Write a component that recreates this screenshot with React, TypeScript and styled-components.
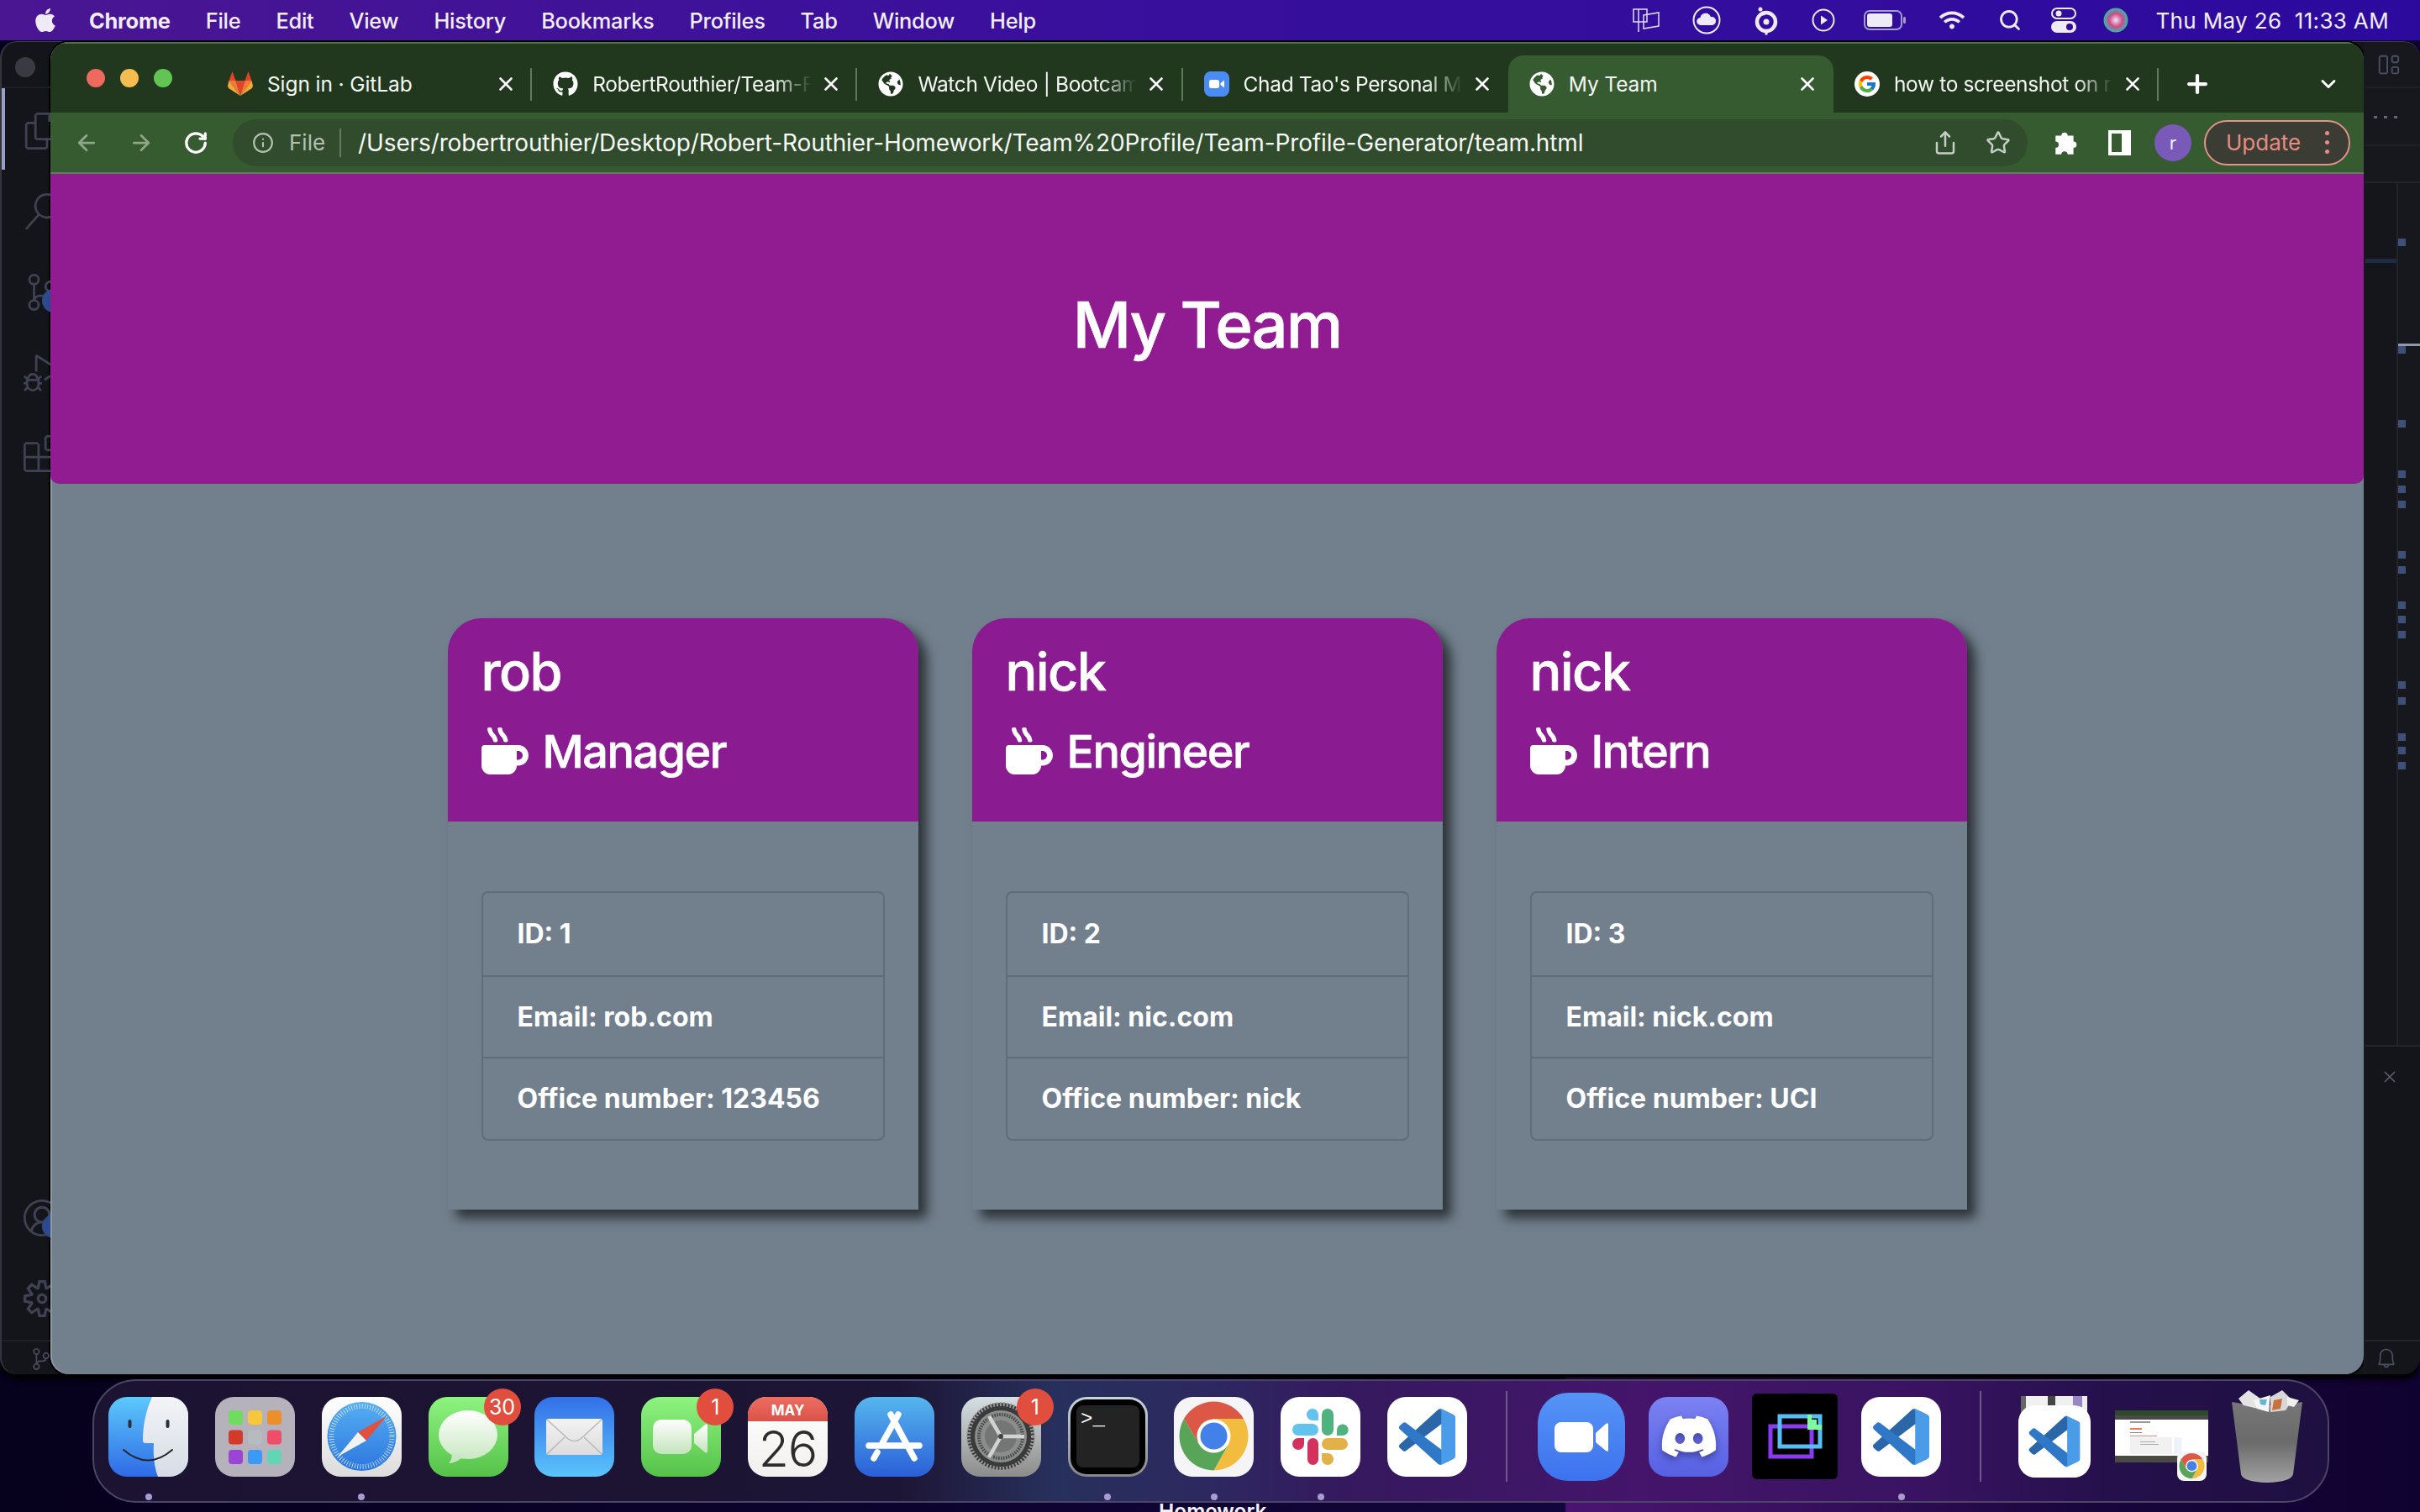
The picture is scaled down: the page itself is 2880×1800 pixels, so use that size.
import React from 'react';
import styled, { createGlobalStyle } from 'styled-components';
import { FaApple, FaDiscord } from 'react-icons/fa6';
import { FaGithub, FaGlobeAmericas, FaMugHot, FaWifi } from 'react-icons/fa';
import { FcGoogle } from 'react-icons/fc';
import { ArrowLeft, ArrowRight, ChevronDown, Info, Plus, RotateCw, Search, Share, Star, X } from 'lucide-react';
import {
  VscAccount, VscBell, VscClose, VscDebugAlt, VscExtensions, VscFiles, VscLayout, VscSearch,
  VscSettingsGear, VscSourceControl,
} from 'react-icons/vsc';

const GlobalStyle = createGlobalStyle`
  html, body { margin: 0; padding: 0; background: #07021f; }
  * { box-sizing: border-box; }
  body { font-family: Inter, "Liberation Sans", sans-serif; }
`;

const Desktop = styled.div`
  position: relative;
  width: 2880px;
  height: 1800px;
  overflow: hidden;
  background: linear-gradient(
    90deg,
    #06011c 0,
    #12053c 1862px,
    #4a1470 1864px,
    #3a1060 2120px,
    #17053b 2500px,
    #100230 100%
  );
`;

const MenuBar = styled.header`
  height: 48px;
  display: flex;
  align-items: center;
  padding: 0 37px 0 40px;
  color: #f1edf9;
  font-size: 26px;
  background: linear-gradient(90deg, #4a1692 0%, #3a109c 40%, #2c0a9e 100%);
`;

const MenuLeft = styled.nav`
  display: flex;
  align-items: center;
  gap: 42px;
`;

const AppleMark = styled(FaApple)`
  width: 28px;
  height: 32px;
  margin-right: -4px;
  color: #efeaf7;
`;

const MenuItem = styled.span<{ $bold?: boolean }>`
  font-size: 25.4px;
  font-weight: ${(p) => (p.$bold ? 700 : 500)};
  letter-spacing: -0.25px;
`;

const MenuRight = styled.div`
  margin-left: auto;
  display: flex;
  align-items: center;
`;

const StatusSlot = styled.span<{ $w: number; $ml: number }>`
  display: inline-flex;
  justify-content: center;
  width: ${(p) => p.$w}px;
  margin-left: ${(p) => p.$ml}px;
`;

const Clock = styled.span`
  margin-left: 32px;
  font-weight: 400;
  letter-spacing: 0.35px;
  white-space: nowrap;
`;

const Workspace = styled.main`
  display: flex;
  height: 1586px;
  margin-top: 2px;
  background: #14151a;
  border-radius: 20px;
  box-shadow: 0 -1px 0 #3d3d4c, 0 6px 6px #000;
`;

const LeftRail = styled.aside`
  position: relative;
  width: 60px;
  flex: none;
  display: flex;
  flex-direction: column;
  overflow: hidden;
  border-left: 2px solid #34343e;
  border-radius: 20px 0 0 20px;
`;

const RailTop = styled.div`
  height: 55px;
  flex: none;
  padding: 18px 0 0 16px;
  border-bottom: 2px solid #1e1f25;
`;

const DimLight = styled.div`
  width: 24px;
  height: 24px;
  border-radius: 50%;
  background: #3a3b42;
`;

const ActiveMark = styled.div`
  position: absolute;
  left: 0;
  top: 55px;
  width: 4px;
  height: 97px;
  background: #9aa0c2;
`;

const RailIcons = styled.div`
  flex: 1;
  display: flex;
  flex-direction: column;
  gap: 52px;
  padding: 29px 0 27px 26px;
`;

const RailIcon = styled.div<{ $push?: boolean }>`
  position: relative;
  width: 44px;
  height: 44px;
  flex: none;
  color: #3f4252;
  margin-top: ${(p) => (p.$push ? 'auto' : '0')};
  svg { width: 44px; height: 44px; display: block; }
`;

const RailBadge = styled.span`
  position: absolute;
  left: 22px;
  top: 18px;
  width: 28px;
  height: 28px;
  border-radius: 50%;
  background: #2c4a8c;
`;

const RailStatus = styled.div`
  height: 41px;
  flex: none;
  padding: 8px 0 0 34px;
  color: #4a4d5e;
  border-top: 2px solid #1e1f25;
  svg { width: 26px; height: 26px; display: block; }
`;

const ChromeWindow = styled.section`
  width: 2753px;
  flex: none;
  display: flex;
  flex-direction: column;
  overflow: hidden;
  border-radius: 22px;
  background: #72808e;
  box-shadow: 0 0 0 2px #000, inset 2px 0 0 #8c98a4;
`;

const TabStrip = styled.div`
  height: 84px;
  flex: none;
  display: flex;
  align-items: flex-end;
  background: #21381f;
  border-top: 2px solid #566d52;
  color: #fff;
`;

const Lights = styled.div`
  width: 186px;
  flex: none;
  align-self: flex-start;
  display: flex;
  gap: 18px;
  padding: 30px 0 0 43px;
`;

const Light = styled.span<{ $c: string }>`
  width: 22px;
  height: 22px;
  border-radius: 50%;
  background: ${(p) => p.$c};
`;

const TabBox = styled.div<{ $active?: boolean; $sep?: boolean }>`
  position: relative;
  width: 387.2px;
  height: 68px;
  flex: none;
  display: flex;
  align-items: center;
  padding: 0 0 0 25px;
  border-radius: 18px 18px 0 0;
  background: ${(p) => (p.$active ? '#375b31' : 'transparent')};

  &::after {
    content: '';
    display: ${(p) => (p.$sep ? 'block' : 'none')};
    position: absolute;
    right: 0;
    top: 15px;
    height: 39px;
    width: 2px;
    background: #5f7a5b;
  }
`;

const TabIcon = styled.span`
  width: 30px;
  height: 30px;
  flex: none;
  display: flex;
  align-items: center;
  justify-content: center;
  svg { width: 30px; height: 30px; display: block; }
`;

const TabTitle = styled.span<{ $fade?: boolean }>`
  width: 266px;
  margin-left: 17px;
  flex: none;
  white-space: nowrap;
  font-size: 24.5px;
  letter-spacing: ${(p) => (p.$fade ? '-0.35px' : '-0.1px')};
  color: #f4f6f3;
  ${(p) => (p.$fade ? 'mask-image: linear-gradient(90deg, #000 82%, transparent 98%);' : '')}
`;

const TabClose = styled(X)`
  width: 26px;
  height: 26px;
  flex: none;
  margin-left: 5px;
  color: #fff;
`;

const GoogleDisc = styled.span`
  width: 30px;
  height: 30px;
  border-radius: 50%;
  background: #fff;
  display: flex;
  align-items: center;
  justify-content: center;
  svg { width: 24px; height: 24px; }
`;

const NewTab = styled(Plus)`
  width: 34px;
  height: 34px;
  margin: 0 0 17px 29px;
  color: #fff;
  stroke-width: 3;
`;

const TabChevron = styled(ChevronDown)`
  width: 28px;
  height: 28px;
  margin: 0 28px 20px auto;
  color: #fff;
  stroke-width: 2.5;
`;

const Toolbar = styled.div`
  height: 73px;
  flex: none;
  display: flex;
  align-items: center;
  padding: 0 0 0 28px;
  background: #375b31;
  border-bottom: 2px solid #5f7d5a;
  color: #fff;
`;

const NavButton = styled.span<{ $dim?: boolean }>`
  width: 30px;
  height: 30px;
  margin-right: 35px;
  flex: none;
  color: ${(p) => (p.$dim ? '#8fa58c' : '#fff')};
  svg { width: 30px; height: 30px; display: block; }
`;

const Omnibox = styled.div`
  width: 2136px;
  height: 56px;
  flex: none;
  margin-left: -6px;
  display: flex;
  align-items: center;
  padding: 0 20px 0 23px;
  border-radius: 28px;
  background: #304c2c;
`;

const FileChip = styled.span`
  display: flex;
  align-items: center;
  gap: 18px;
  color: #b4c0b2;
  font-size: 26px;
  padding-right: 17px;
  border-right: 2px solid #66795f;
  height: 34px;
  svg { width: 26px; height: 26px; }
`;

const UrlText = styled.span`
  margin-left: 20px;
  font-size: 28px;
  letter-spacing: -0.13px;
  color: #f6f8f5;
  white-space: nowrap;
`;

const OmniActions = styled.span`
  margin-left: auto;
  display: flex;
  align-items: center;
  gap: 33px;
  color: #c4cec2;
  svg { width: 30px; height: 30px; display: block; }
`;

const PuzzleIcon = styled.svg`
  width: 32px;
  height: 32px;
  margin-left: 29px;
  flex: none;
`;

const SidePanel = styled.span`
  width: 27px;
  height: 30px;
  margin-left: 35px;
  flex: none;
  border: 4px solid #fff;
  border-right-width: 11px;
`;

const Avatar = styled.span`
  width: 44px;
  height: 44px;
  margin-left: 28px;
  flex: none;
  display: flex;
  align-items: center;
  justify-content: center;
  border-radius: 50%;
  background: #7a5ab8;
  color: #f2eefa;
  font-size: 22px;
`;

const UpdateButton = styled.span`
  width: 174px;
  height: 54px;
  margin-left: 15px;
  flex: none;
  display: flex;
  align-items: center;
  padding-left: 24px;
  border: 2px solid #e8908a;
  border-radius: 27px;
  background: #3b3c33;
  color: #e58d84;
  font-size: 26px;
`;

const UpdateDots = styled.span`
  margin-left: 29px;
  display: flex;
  flex-direction: column;
  gap: 6px;
  i { display: block; width: 5px; height: 5px; border-radius: 50%; background: #e58d84; }
`;

const Hero = styled.div`
  height: 369px;
  flex: none;
  display: flex;
  align-items: center;
  justify-content: center;
  padding-bottom: 12px;
  border-radius: 0 0 10px 10px;
  background: #911c92;
`;

const HeroTitle = styled.h1`
  margin: 0;
  font-size: 76px;
  font-weight: 500;
  letter-spacing: -2px;
  color: #fff;
  -webkit-text-stroke: 0.6px #fff;
`;

const Team = styled.div`
  display: flex;
  justify-content: center;
  gap: 64px;
  margin-top: 160px;
`;

const Card = styled.article`
  width: 560px;
  height: 704px;
  display: flex;
  flex-direction: column;
  background: #72808e;
  border-radius: 40px 40px 0 0;
  box-shadow: 10px 10px 14px rgba(0, 0, 0, 0.62);
`;

const CardHead = styled.div`
  height: 242px;
  flex: none;
  padding: 25px 40px 0;
  border-radius: 40px 40px 0 0;
  background: #8a1b90;
  color: #fff;
  -webkit-text-stroke: 0.6px #fff;
`;

const Name = styled.h2`
  margin: 0 0 23px;
  font-size: 63px;
  line-height: 77px;
  font-weight: 500;
  letter-spacing: -1.6px;
`;

const Role = styled.h3`
  margin: 0;
  display: flex;
  align-items: center;
  gap: 17px;
  font-size: 54px;
  line-height: 67px;
  font-weight: 500;
  letter-spacing: -1.5px;
  svg { width: 56px; height: 56px; flex: none; margin-top: -2px; -webkit-text-stroke: 0; }
`;

const CardBody = styled.div`
  flex: 1;
  padding: 83px 40px;
`;

const InfoList = styled.ul`
  margin: 0;
  padding: 0;
  list-style: none;
  border: 2px solid #5f6c7a;
  border-radius: 8px;
`;

const InfoRow = styled.li`
  height: 97.5px;
  display: flex;
  align-items: center;
  padding: 0 40px 0 41px;
  font-size: 32px;
  font-weight: 700;
  letter-spacing: 0;
  color: #fff;
  & + & { border-top: 2px solid #5f6c7a; }
`;

const RightRail = styled.aside`
  flex: 1;
  display: flex;
  flex-direction: column;
  overflow: hidden;
  padding-left: 2px;
  border-radius: 0 20px 20px 0;
  background: #17181e;
  color: #4c5063;
`;

const RightHead = styled.div`
  height: 55px;
  flex: none;
  padding: 12px 0 0 12px;
  border-bottom: 2px solid #1f2027;
  svg { width: 30px; height: 30px; display: block; }
`;

const RightDots = styled.div`
  height: 69px;
  flex: none;
  display: flex;
  gap: 8px;
  padding: 33px 0 0 10px;
  border-bottom: 2px solid #1f2027;
  i { width: 4px; height: 3px; background: #62667a; }
`;

const RightSpacer = styled.div`
  height: 44px;
  flex: none;
  border-bottom: 2px solid #22232b;
`;

const EditorArea = styled.div`
  height: 1028px;
  flex: none;
  display: flex;
  border-bottom: 2px solid #22232b;
`;

const EditorPane = styled.div`
  width: 39px;
  flex: none;
  background: #15161b;
  border-right: 2px solid #22232b;
`;

const FindLine = styled.div`
  height: 5px;
  margin-top: 90px;
  background: #1f2b40;
`;

const Minimap = styled.div`
  flex: 1;
  display: flex;
  flex-direction: column;
`;

const Tick = styled.div<{ $top: number; $white?: boolean }>`
  width: ${(p) => (p.$white ? '100%' : '9px')};
  height: ${(p) => (p.$white ? 3 : 9)}px;
  margin-top: ${(p) => p.$top}px;
  flex: none;
  background: ${(p) => (p.$white ? '#9397ab' : '#3e5078')};
`;

const PanelArea = styled.div`
  flex: 1;
  padding: 24px 0 0 17px;
  background: #14151a;
  svg { width: 24px; height: 24px; display: block; color: #5d6174; }
`;

const RightStatus = styled.div`
  height: 41px;
  flex: none;
  padding: 7px 0 0 12px;
  border-top: 2px solid #22232b;
  background: #14151a;
  svg { width: 26px; height: 26px; display: block; }
`;

const Dock = styled.footer`
  display: flex;
  align-items: center;
  width: 2662px;
  height: 147px;
  margin: 6px 0 0 110px;
  padding: 0 0 11px 17px;
  border: 2px solid #4b4663;
  border-radius: 52px;
  background: linear-gradient(
    90deg,
    #1c1231 0%,
    #1d1535 36%,
    #27305c 43%,
    #2d2860 50%,
    #35195e 56%,
    #44156b 69%,
    #391361 82%,
    #25104c 90%,
    #1e1040 100%
  );
`;

const DockItem = styled.div<{ $w?: number; $h?: number; $ml?: number; $mt?: number }>`
  position: relative;
  flex: none;
  width: ${(p) => p.$w ?? 95}px;
  height: ${(p) => p.$h ?? 95}px;
  margin-left: ${(p) => p.$ml ?? 31.85}px;
  margin-top: ${(p) => p.$mt ?? 0}px;
  & > svg { display: block; width: 100%; height: 100%; }
`;

const Badge = styled.span`
  position: absolute;
  top: -10px;
  right: -15px;
  width: 44px;
  height: 44px;
  display: flex;
  align-items: center;
  justify-content: center;
  border-radius: 50%;
  background: #e14e3d;
  color: #fff;
  font-size: 25px;
`;

const RunDot = styled.span`
  position: absolute;
  left: 50%;
  top: 115px;
  width: 8px;
  height: 8px;
  margin-left: -4px;
  border-radius: 50%;
  background: #a89cd0;
`;

const DockDivider = styled.span<{ $ml: number }>`
  width: 2px;
  height: 108px;
  margin-left: ${(p) => p.$ml}px;
  flex: none;
  background: #6d5a8a;
`;

const DiscordTile = styled.div`
  width: 95px;
  height: 95px;
  display: flex;
  align-items: center;
  justify-content: center;
  border-radius: 22px;
  background: linear-gradient(180deg, #7c82f2, #5660e2);
  color: #fff;
  svg { width: 70px; height: 70px; filter: drop-shadow(0 4px 4px rgba(30, 30, 90, 0.5)); }
`;

const VsTile = styled.div`
  width: 86px;
  height: 86px;
  position: absolute;
  left: 0;
  bottom: 0;
  svg { display: block; width: 100%; height: 100%; }
`;

const PaperPeek = styled.div`
  position: absolute;
  left: 3px;
  top: 0;
  width: 79px;
  height: 30px;
  background: linear-gradient(90deg, #666 0 8%, #f1f1f1 8% 40%, #444 40% 52%, #f0f0f0 52% 78%, #9a86c4 78% 92%, #eee 92%);
`;

const MiniChrome = styled.div`
  position: absolute;
  right: 2px;
  bottom: -22px;
  width: 35px;
  height: 35px;
  svg { display: block; width: 100%; height: 100%; }
`;

const DeskLabel = styled.span`
  position: absolute;
  left: 1379px;
  top: 1784px;
  font-size: 24.5px;
  font-weight: 600;
  color: #f4f2f8;
`;

const GlobeIcon = () => <FaGlobeAmericas color="#fff" />;

const GitlabIcon = () => (
  <svg viewBox="0 0 30 30">
    <polygon points="15,29 20.5,11 9.5,11" fill="#e24329" />
    <polygon points="15,29 9.5,11 1.5,11" fill="#f27a36" />
    <polygon points="1.5,11 0,17 1,20 15,29" fill="#f6a73a" />
    <polygon points="15,29 20.5,11 28.5,11" fill="#f27a36" />
    <polygon points="28.5,11 30,17 29,20 15,29" fill="#f6a73a" />
    <polygon points="1.5,11 9.5,11 5.5,0" fill="#e24329" />
    <polygon points="28.5,11 20.5,11 24.5,0" fill="#e24329" />
  </svg>
);

const ZoomTabIcon = () => (
  <svg viewBox="0 0 30 30">
    <rect width="30" height="30" rx="8" fill="#4a8cf6" />
    <rect x="6" y="10" width="12" height="10" rx="2.5" fill="#fff" />
    <path d="M19.5 14l4.5-3.5v9l-4.5-3.5z" fill="#fff" />
  </svg>
);

// titles stop where the tab cuts them off
const tabs = [
  { title: 'Sign in · GitLab', icon: <GitlabIcon />, sep: true },
  { title: 'RobertRouthier/Team-F', icon: <FaGithub color="#fff" />, sep: true, fade: true },
  { title: 'Watch Video | Bootcam', icon: <GlobeIcon />, sep: true, fade: true },
  { title: "Chad Tao's Personal M", icon: <ZoomTabIcon />, fade: true },
  { title: 'My Team', icon: <GlobeIcon />, active: true },
  {
    title: 'how to screenshot on r',
    icon: (
      <GoogleDisc>
        <FcGoogle />
      </GoogleDisc>
    ),
    sep: true,
    fade: true,
  },
];

const members = [
  { name: 'rob', role: 'Manager', id: 1, email: 'rob.com', office: '123456' },
  { name: 'nick', role: 'Engineer', id: 2, email: 'nic.com', office: 'nick' },
  { name: 'nick', role: 'Intern', id: 3, email: 'nick.com', office: 'UCI' },
];

const menus = ['File', 'Edit', 'View', 'History', 'Bookmarks', 'Profiles', 'Tab', 'Window', 'Help'];

// y gaps between the overview ruler marks below the white cursor line
const ticks = [0, 79, 51, 9, 9, 51, 9, 33, 8, 9, 51, 10, 34, 7, 9];

const Squircle = ({ fill }: { fill: string }) => <rect width="95" height="95" rx="22" fill={fill} />;

const Grad = ({ id, from, to }: { id: string; from: string; to: string }) => (
  <linearGradient id={id} x1="0" y1="0" x2="0" y2="1">
    <stop offset="0" stopColor={from} />
    <stop offset="1" stopColor={to} />
  </linearGradient>
);

const Finder = () => (
  <svg viewBox="0 0 95 95">
    <defs>
      <Grad id="finderB" from="#5cc9fb" to="#2f6ae6" />
      <Grad id="finderW" from="#f3f4f7" to="#d6dce6" />
    </defs>
    <Squircle fill="url(#finderB)" />
    <path d="M52 0C44 18 41 35 41 52q0 3 3 3h10c-1 15 1 30 5 40h14a22 22 0 0 0 22-22V22A22 22 0 0 0 73 0z" fill="url(#finderW)" />
    <rect x="23.5" y="27" width="4" height="10" rx="2" fill="#2a2f3a" />
    <rect x="68.5" y="27" width="4" height="10" rx="2" fill="#2a2f3a" />
    <path d="M18 63Q47 88 76 63" fill="none" stroke="#23252c" strokeWidth="2" strokeLinecap="round" />
  </svg>
);

const padColors = ['#6fdc5e', '#f7c63b', '#ec8f2b', '#d5392a', '#b5bcc0', '#ee4f68', '#9a45d6', '#3a9af5', '#62d5b4'];

const Launchpad = () => (
  <svg viewBox="0 0 95 95">
    <Squircle fill="#b5b2bc" />
    {padColors.map((c, i) => (
      <rect key={c} x={16 + (i % 3) * 23} y={16 + Math.floor(i / 3) * 23.5} width="17" height="17" rx="4" fill={c} />
    ))}
  </svg>
);

const Safari = () => (
  <svg viewBox="0 0 95 95">
    <defs>
      <Grad id="safBg" from="#ffffff" to="#dcdcdc" />
      <Grad id="safBlue" from="#55aef2" to="#2c76df" />
    </defs>
    <Squircle fill="url(#safBg)" />
    <circle cx="47.5" cy="47" r="41" fill="url(#safBlue)" />
    <circle cx="47.5" cy="47" r="36" fill="none" stroke="#dcecfb" strokeWidth="6" strokeDasharray="0.8 2.4" />
    <polygon points="77,23 53,52 43,42" fill="#e0503c" />
    <polygon points="19,71 43,42 53,52" fill="#f2f2f2" />
  </svg>
);

const Messages = () => (
  <svg viewBox="0 0 95 95">
    <defs>
      <Grad id="msgBg" from="#8df47f" to="#56c24a" />
      <Grad id="msgB" from="#ffffff" to="#c9e8c2" />
    </defs>
    <Squircle fill="url(#msgBg)" />
    <ellipse cx="47" cy="45" rx="35" ry="29" fill="url(#msgB)" />
    <path d="M28 66c0 6-1 10-4 13 5 0 12-3 16-7z" fill="#c9e8c2" />
  </svg>
);

const Mail = () => (
  <svg viewBox="0 0 95 95">
    <defs>
      <Grad id="mailBg" from="#336fe8" to="#5ac4fb" />
      <Grad id="mailE" from="#f3f3f3" to="#dcdcdc" />
    </defs>
    <Squircle fill="url(#mailBg)" />
    <rect x="14" y="26" width="67" height="43" rx="3" fill="url(#mailE)" />
    <path d="M15 27l25 23q7.500 5 15 0l25-23M15 68l21-20M80 68L59 48" fill="none" stroke="#b4b4b4" strokeWidth="1.200" />
  </svg>
);

const FaceTime = () => (
  <svg viewBox="0 0 95 95">
    <defs>
      <Grad id="ftBg" from="#8df47f" to="#56c24a" />
      <Grad id="ftC" from="#ffffff" to="#c4e4bc" />
    </defs>
    <Squircle fill="url(#ftBg)" />
    <rect x="14" y="27" width="46" height="41" rx="10" fill="url(#ftC)" />
    <path d="M63 44l13-11q3-2 3 2v29q0 4-3 2L63 55z" fill="url(#ftC)" />
  </svg>
);

const CalendarIcon = () => (
  <svg viewBox="0 0 95 95">
    <defs>
      <Grad id="calH" from="#ef6c60" to="#d8544a" />
      <Grad id="calB" from="#ffffff" to="#f1f0ee" />
    </defs>
    <Squircle fill="url(#calB)" />
    <path d="M0 29V22A22 22 0 0 1 22 0h51a22 22 0 0 1 22 22v7z" fill="url(#calH)" />
    <text x="47.500" y="22" textAnchor="middle" fontFamily="Inter, sans-serif" fontWeight="700" fontSize="17" fill="#fff">
      MAY
    </text>
    <text x="47.500" y="83" textAnchor="middle" fontFamily="Inter, sans-serif" fontWeight="300" fontSize="59" letterSpacing="-1" fill="#2c2c2c">
      26
    </text>
  </svg>
);

const AppStore = () => (
  <svg viewBox="0 0 95 95">
    <defs>
      <Grad id="asBg" from="#56b6ee" to="#2a5fd8" />
    </defs>
    <Squircle fill="url(#asBg)" />
    <path d="M52 21L33 55M27 66l-4 7M43 21l28 52M17 58h60" fill="none" stroke="#fff" strokeWidth="7.500" strokeLinecap="round" />
  </svg>
);

const Prefs = () => (
  <svg viewBox="0 0 95 95">
    <defs>
      <Grad id="spBg" from="#d6dfe3" to="#8c8c8a" />
    </defs>
    <Squircle fill="url(#spBg)" />
    <circle cx="47" cy="47" r="40" fill="#3a3a3a" />
    <circle cx="47" cy="47" r="38.500" fill="none" stroke="#9a9a9a" strokeWidth="5" strokeDasharray="2 2" />
    <circle cx="47" cy="47" r="31" fill="#8b8d8d" />
    <circle cx="47" cy="47" r="26" fill="none" stroke="#444" strokeWidth="4" strokeDasharray="1.500 1.500" />
    <circle cx="47" cy="47" r="19" fill="#747676" />
    <path d="M47 47L33 23M47 47h28M47 47L33 72" stroke="#d2d2d2" strokeWidth="4.500" />
    <circle cx="47" cy="47" r="3" fill="#444" />
  </svg>
);

const TerminalIcon = () => (
  <svg viewBox="0 0 95 95">
    <defs>
      <Grad id="trBg" from="#c6d6dc" to="#878787" />
    </defs>
    <Squircle fill="url(#trBg)" />
    <rect x="3" y="3" width="89" height="89" rx="19" fill="#000" />
    <rect x="10" y="10" width="75" height="74" rx="8" fill="#232323" />
    <text x="15" y="33" fontFamily="Liberation Mono, monospace" fontSize="24" fill="#fff">
      {'>_'}
    </text>
  </svg>
);

const ChromeMark = () => (
  <>
    <path d="M12 26A41 41 0 0 1 83 26H47.500L30 56.500z" fill="#dc5745" />
    <path d="M83 26A41 41 0 0 1 47.500 87.500L65 56.500 47.500 26z" fill="#f2bc3e" />
    <path d="M47.500 87.500A41 41 0 0 1 12 26L30 56.500H65z" fill="#58a55a" />
    <circle cx="47.500" cy="46.500" r="20" fill="#fff" />
    <circle cx="47.500" cy="46.500" r="16" fill="#4480ea" />
  </>
);

const ChromeIcon = () => (
  <svg viewBox="0 0 95 95">
    <Squircle fill="#f5f5f7" />
    <ChromeMark />
  </svg>
);

const SlackIcon = () => (
  <svg viewBox="0 0 95 95">
    <Squircle fill="#fff" />
    <rect x="14" y="32" width="31" height="14" rx="7" fill="#61c3ee" />
    <path d="M45 28h-6.500a7 7 0 1 1 6.500-7z" fill="#61c3ee" />
    <rect x="49" y="14" width="14" height="32" rx="7" fill="#4fb37f" />
    <path d="M67 46v-7a6.800 6.800 0 1 1 6.500 7z" fill="#4fb37f" />
    <rect x="32" y="49" width="13" height="32" rx="6.500" fill="#d2325d" />
    <path d="M28 49v7a7 7 0 1 1-7-7z" fill="#d2325d" />
    <rect x="49" y="49" width="31" height="14" rx="7" fill="#e3b14a" />
    <path d="M49 67h7a7 7 0 1 1-7 7z" fill="#e3b14a" />
  </svg>
);

const VsMark = () => (
  <g transform="translate(14 14) scale(0.67)">
    <path d="M96.46 10.8L75.86.88C73.47-.27 70.62.21 68.75 2.08L1.3 63.58c-1.81 1.66-1.81 4.51 0 6.16l5.51 5.01c1.49 1.35 3.72 1.45 5.32.24L93.36 13.37C96.09 11.3 100 13.25 100 16.67v-.24c0-2.4-1.38-4.59-3.54-5.63z" fill="#2a66a8" />
    <path d="M96.46 89.2l-20.6 9.92c-2.39 1.15-5.24.66-7.11-1.2L1.3 36.42c-1.81-1.66-1.81-4.51 0-6.16l5.51-5.01c1.49-1.35 3.72-1.45 5.32-.24l81.23 61.62c2.73 2.07 6.64.12 6.64-3.3v.24c0 2.4-1.38 4.59-3.54 5.63z" fill="#2f78c8" />
    <path d="M75.86 99.13c-2.39 1.14-5.24.66-7.11-1.21 2.31 2.31 6.25.67 6.25-2.59V4.67c0-3.26-3.94-4.9-6.25-2.59 1.87-1.87 4.72-2.35 7.11-1.2l20.6 9.9c2.16 1.04 3.54 3.23 3.54 5.63v67.18c0 2.4-1.38 4.59-3.54 5.63z" fill="#4a9be8" />
  </g>
);

const VsIcon = () => (
  <svg viewBox="0 0 95 95">
    <Squircle fill="#fff" />
    <VsMark />
  </svg>
);

const ZoomIcon = () => (
  <svg viewBox="0 0 104 105">
    <defs>
      <Grad id="zmBg" from="#5594f6" to="#3d72ee" />
    </defs>
    <rect width="104" height="105" rx="36" fill="url(#zmBg)" />
    <rect x="20" y="35" width="46" height="36" rx="8" fill="#fff" />
    <path d="M69 48l12-11q3-2 3 1v30q0 3-3 1L69 59z" fill="#fff" />
  </svg>
);

const ScreenIcon = () => (
  <svg viewBox="0 0 102 102">
    <rect width="102" height="102" rx="6" fill="#000" />
    <rect x="22" y="39" width="49" height="36" fill="none" stroke="#8a3af0" strokeWidth="5" />
    <rect x="33" y="27" width="48" height="36" fill="none" stroke="#55bff5" strokeWidth="5" />
    <polygon points="66,25 71,25 71,31 77,31 77,37 83,37 83,43 66,43" fill="#7dfba0" />
  </svg>
);

const Thumb = () => (
  <svg viewBox="0 0 111 62">
    <rect width="111" height="62" fill="#fff" />
    <rect width="111" height="6" fill="#2c4a28" />
    <rect y="6" width="111" height="5" fill="#4a4a4a" />
    <rect x="18" y="13" width="24" height="2" fill="#999" />
    <rect x="18" y="21" width="14" height="2" fill="#ea7a5c" />
    <rect x="18" y="26" width="14" height="1" fill="#888" />
    <rect x="18" y="30" width="32" height="1" fill="#e88" />
    <rect x="18" y="32" width="50" height="20" fill="#f1f1f1" />
    <rect x="30" y="37" width="18" height="1" fill="#aaa" />
    <rect x="30" y="40" width="22" height="1" fill="#aaa" />
    <rect x="70" y="32" width="9" height="20" fill="#eef2fa" />
    <rect y="54" width="111" height="8" fill="#4a4a42" />
  </svg>
);

const Trash = () => (
  <svg viewBox="0 0 84 110">
    <defs>
      <linearGradient id="tsBg" x1="0" y1="0" x2="0" y2="1">
        <stop offset="0" stopColor="#777" />
        <stop offset="0.5" stopColor="#6a6a6a" />
        <stop offset="1" stopColor="#a2a2a2" />
      </linearGradient>
    </defs>
    <path d="M0 14q42 8 84 0L73 100q-2 9-31 10-29-1-31-10z" fill="url(#tsBg)" />
    <polygon points="8,10 20,0 34,10 40,24 14,18" fill="#e4e4e4" />
    <polygon points="26,12 46,6 44,26 30,22" fill="#f5f5f5" />
    <polygon points="33,11 42,11 40,18 34,17" fill="#5fb7d6" />
    <polygon points="46,8 60,0 72,12 64,24 46,26" fill="#d8d8d8" />
    <polygon points="50,12 60,10 58,22 48,24" fill="#c9713c" />
    <polygon points="66,8 80,12 74,20 66,18" fill="#f0f0f0" />
  </svg>
);

const FlagsGlyph = () => (
  <svg width="34" height="34" viewBox="0 0 34 34" fill="none" stroke="#e4ddf0" strokeWidth="1.500">
    <path d="M2 4h16v15H2zM14 11l18-3v16l-18 3zM8 4v27" />
  </svg>
);

const CloudGlyph = () => (
  <svg width="34" height="34" viewBox="0 0 34 34">
    <circle cx="17" cy="17" r="15.500" fill="none" stroke="#efeaf7" strokeWidth="2" />
    <path d="M10 23a4.500 4.500 0 0 1-.5-9 6.500 6.500 0 0 1 12.500-1 5 5 0 0 1 2 10z" fill="#efeaf7" />
  </svg>
);

const SteelGlyph = () => (
  <svg width="36" height="36" viewBox="0 0 36 36">
    <circle cx="18" cy="20" r="11" fill="none" stroke="#efeaf7" strokeWidth="4.500" />
    <circle cx="18" cy="20" r="3.500" fill="#efeaf7" />
    <circle cx="11" cy="5" r="2.500" fill="#efeaf7" />
    <path d="M13 8l3 4" stroke="#efeaf7" strokeWidth="2.500" />
    <circle cx="18" cy="34" r="1.800" fill="#efeaf7" />
  </svg>
);

const PlayGlyph = () => (
  <svg width="28" height="28" viewBox="0 0 28 28">
    <circle cx="14" cy="14" r="12.500" fill="none" stroke="#efeaf7" strokeWidth="2" />
    <path d="M11 8.500l8 5.500-8 5.500z" fill="#efeaf7" />
  </svg>
);

const BatteryGlyph = () => (
  <svg width="50" height="24" viewBox="0 0 50 24">
    <rect x="1" y="1" width="44" height="22" rx="6" fill="none" stroke="#a49ccc" strokeWidth="2" />
    <rect x="4" y="4" width="30" height="16" rx="3" fill="#efeaf7" />
    <rect x="47" y="8" width="3" height="8" rx="1.500" fill="#a49ccc" />
  </svg>
);

const ControlGlyph = () => (
  <svg width="30" height="30" viewBox="0 0 30 30">
    <rect x="1" y="1" width="28" height="12" rx="6" fill="none" stroke="#efeaf7" strokeWidth="2" />
    <circle cx="9" cy="7" r="3.500" fill="#efeaf7" />
    <rect x="0" y="16" width="30" height="14" rx="7" fill="#efeaf7" />
    <circle cx="22" cy="23" r="4" fill="#2c0a9e" />
  </svg>
);

const SiriGlyph = () => (
  <svg width="30" height="30" viewBox="0 0 30 30">
    <defs>
      <radialGradient id="siri" cx="50%" cy="50%" r="60%">
        <stop offset="0" stopColor="#e8e8f0" />
        <stop offset="0.45" stopColor="#d04a8c" />
        <stop offset="0.8" stopColor="#3fb3a8" />
        <stop offset="1" stopColor="#2a3a7a" />
      </radialGradient>
    </defs>
    <circle cx="15" cy="15" r="14.500" fill="url(#siri)" />
  </svg>
);

const App = () => (
  <Desktop>
    <GlobalStyle />
    <MenuBar>
      <MenuLeft>
        <AppleMark />
        <MenuItem $bold>Chrome</MenuItem>
        {menus.map((m) => (
          <MenuItem key={m}>{m}</MenuItem>
        ))}
      </MenuLeft>
      <MenuRight>
        <StatusSlot $w={34} $ml={0}><FlagsGlyph /></StatusSlot>
        <StatusSlot $w={34} $ml={38}><CloudGlyph /></StatusSlot>
        <StatusSlot $w={36} $ml={36}><SteelGlyph /></StatusSlot>
        <StatusSlot $w={28} $ml={36}><PlayGlyph /></StatusSlot>
        <StatusSlot $w={50} $ml={34}><BatteryGlyph /></StatusSlot>
        <StatusSlot $w={34} $ml={38}><FaWifi size={30} color="#efeaf7" /></StatusSlot>
        <StatusSlot $w={28} $ml={38}><Search size={30} color="#efeaf7" strokeWidth={2.4} /></StatusSlot>
        <StatusSlot $w={30} $ml={35}><ControlGlyph /></StatusSlot>
        <StatusSlot $w={30} $ml={32}><SiriGlyph /></StatusSlot>
        <Clock>Thu May 26&nbsp;&nbsp;11:33 AM</Clock>
      </MenuRight>
    </MenuBar>

    <Workspace>
      <LeftRail>
        <RailTop>
          <DimLight />
        </RailTop>
        <ActiveMark />
        <RailIcons>
          <RailIcon><VscFiles /></RailIcon>
          <RailIcon><VscSearch /></RailIcon>
          <RailIcon><VscSourceControl /><RailBadge /></RailIcon>
          <RailIcon><VscDebugAlt /></RailIcon>
          <RailIcon><VscExtensions /></RailIcon>
          <RailIcon $push><VscAccount /><RailBadge /></RailIcon>
          <RailIcon><VscSettingsGear /></RailIcon>
        </RailIcons>
        <RailStatus><VscSourceControl /></RailStatus>
      </LeftRail>

      <ChromeWindow>
        <TabStrip>
          <Lights>
            <Light $c="#ee6a5f" />
            <Light $c="#f5bd4f" />
            <Light $c="#61c554" />
          </Lights>
          {tabs.map((t) => (
            <TabBox key={t.title} $active={t.active} $sep={t.sep}>
              <TabIcon>{t.icon}</TabIcon>
              <TabTitle $fade={t.fade}>{t.title}</TabTitle>
              <TabClose strokeWidth={2.4} />
            </TabBox>
          ))}
          <NewTab />
          <TabChevron />
        </TabStrip>

        <Toolbar>
          <NavButton $dim><ArrowLeft strokeWidth={2.2} /></NavButton>
          <NavButton $dim><ArrowRight strokeWidth={2.2} /></NavButton>
          <NavButton><RotateCw strokeWidth={2.6} /></NavButton>
          <Omnibox>
            <FileChip>
              <Info />
              File
            </FileChip>
            <UrlText>/Users/robertrouthier/Desktop/Robert-Routhier-Homework/Team%20Profile/Team-Profile-Generator/team.html</UrlText>
            <OmniActions>
              <Share strokeWidth={2} />
              <Star strokeWidth={2} />
            </OmniActions>
          </Omnibox>
          <PuzzleIcon viewBox="0 0 30 30">
            <path d="M4 7h6.500a3.500 3.500 0 1 1 7 0H24v6.500a3.500 3.500 0 1 1 0 7V28h-6.500a3.500 3.500 0 1 0-7 0H4v-7.500a3.500 3.500 0 1 0 0-7z" fill="#fff" />
          </PuzzleIcon>
          <SidePanel />
          <Avatar>r</Avatar>
          <UpdateButton>
            Update
            <UpdateDots>
              <i />
              <i />
              <i />
            </UpdateDots>
          </UpdateButton>
        </Toolbar>

        <Hero>
          <HeroTitle>My Team</HeroTitle>
        </Hero>

        <Team>
          {members.map((m) => (
            <Card key={m.id}>
              <CardHead>
                <Name>{m.name}</Name>
                <Role>
                  <FaMugHot />
                  {m.role}
                </Role>
              </CardHead>
              <CardBody>
                <InfoList>
                  <InfoRow>ID: {m.id}</InfoRow>
                  <InfoRow>Email: {m.email}</InfoRow>
                  <InfoRow>Office number: {m.office}</InfoRow>
                </InfoList>
              </CardBody>
            </Card>
          ))}
        </Team>
      </ChromeWindow>

      <RightRail>
        <RightHead><VscLayout /></RightHead>
        <RightDots><i /><i /><i /></RightDots>
        <RightSpacer />
        <EditorArea>
          <EditorPane><FindLine /></EditorPane>
          <Minimap>
            <Tick $top={66} />
            <Tick $top={116} $white />
            {ticks.map((gap, i) => (
              <Tick key={i} $top={gap} />
            ))}
          </Minimap>
        </EditorArea>
        <PanelArea><VscClose /></PanelArea>
        <RightStatus><VscBell /></RightStatus>
      </RightRail>
    </Workspace>

    <Dock>
      <DockItem $ml={0}><Finder /><RunDot /></DockItem>
      <DockItem><Launchpad /></DockItem>
      <DockItem><Safari /><RunDot /></DockItem>
      <DockItem><Messages /><Badge>30</Badge></DockItem>
      <DockItem><Mail /></DockItem>
      <DockItem><FaceTime /><Badge>1</Badge></DockItem>
      <DockItem><CalendarIcon /></DockItem>
      <DockItem><AppStore /></DockItem>
      <DockItem><Prefs /><Badge>1</Badge></DockItem>
      <DockItem><TerminalIcon /><RunDot /></DockItem>
      <DockItem><ChromeIcon /><RunDot /></DockItem>
      <DockItem><SlackIcon /><RunDot /></DockItem>
      <DockItem><VsIcon /></DockItem>
      <DockDivider $ml={46} />
      <DockItem $w={104} $h={105} $ml={36}><ZoomIcon /></DockItem>
      <DockItem $ml={28}><DiscordTile><FaDiscord /></DiscordTile></DockItem>
      <DockItem $w={102} $h={102} $ml={28}><ScreenIcon /></DockItem>
      <DockItem $ml={28}><VsIcon /><RunDot /></DockItem>
      <DockDivider $ml={46} />
      <DockItem $w={86} $h={97} $ml={44}>
        <PaperPeek />
        <VsTile><VsIcon /></VsTile>
      </DockItem>
      <DockItem $w={111} $h={62} $ml={29}>
        <Thumb />
        <MiniChrome><ChromeIcon /></MiniChrome>
      </DockItem>
      <DockItem $w={84} $h={110} $ml={28}><Trash /></DockItem>
    </Dock>
    <DeskLabel>Homework</DeskLabel>
  </Desktop>
);

export default App;
